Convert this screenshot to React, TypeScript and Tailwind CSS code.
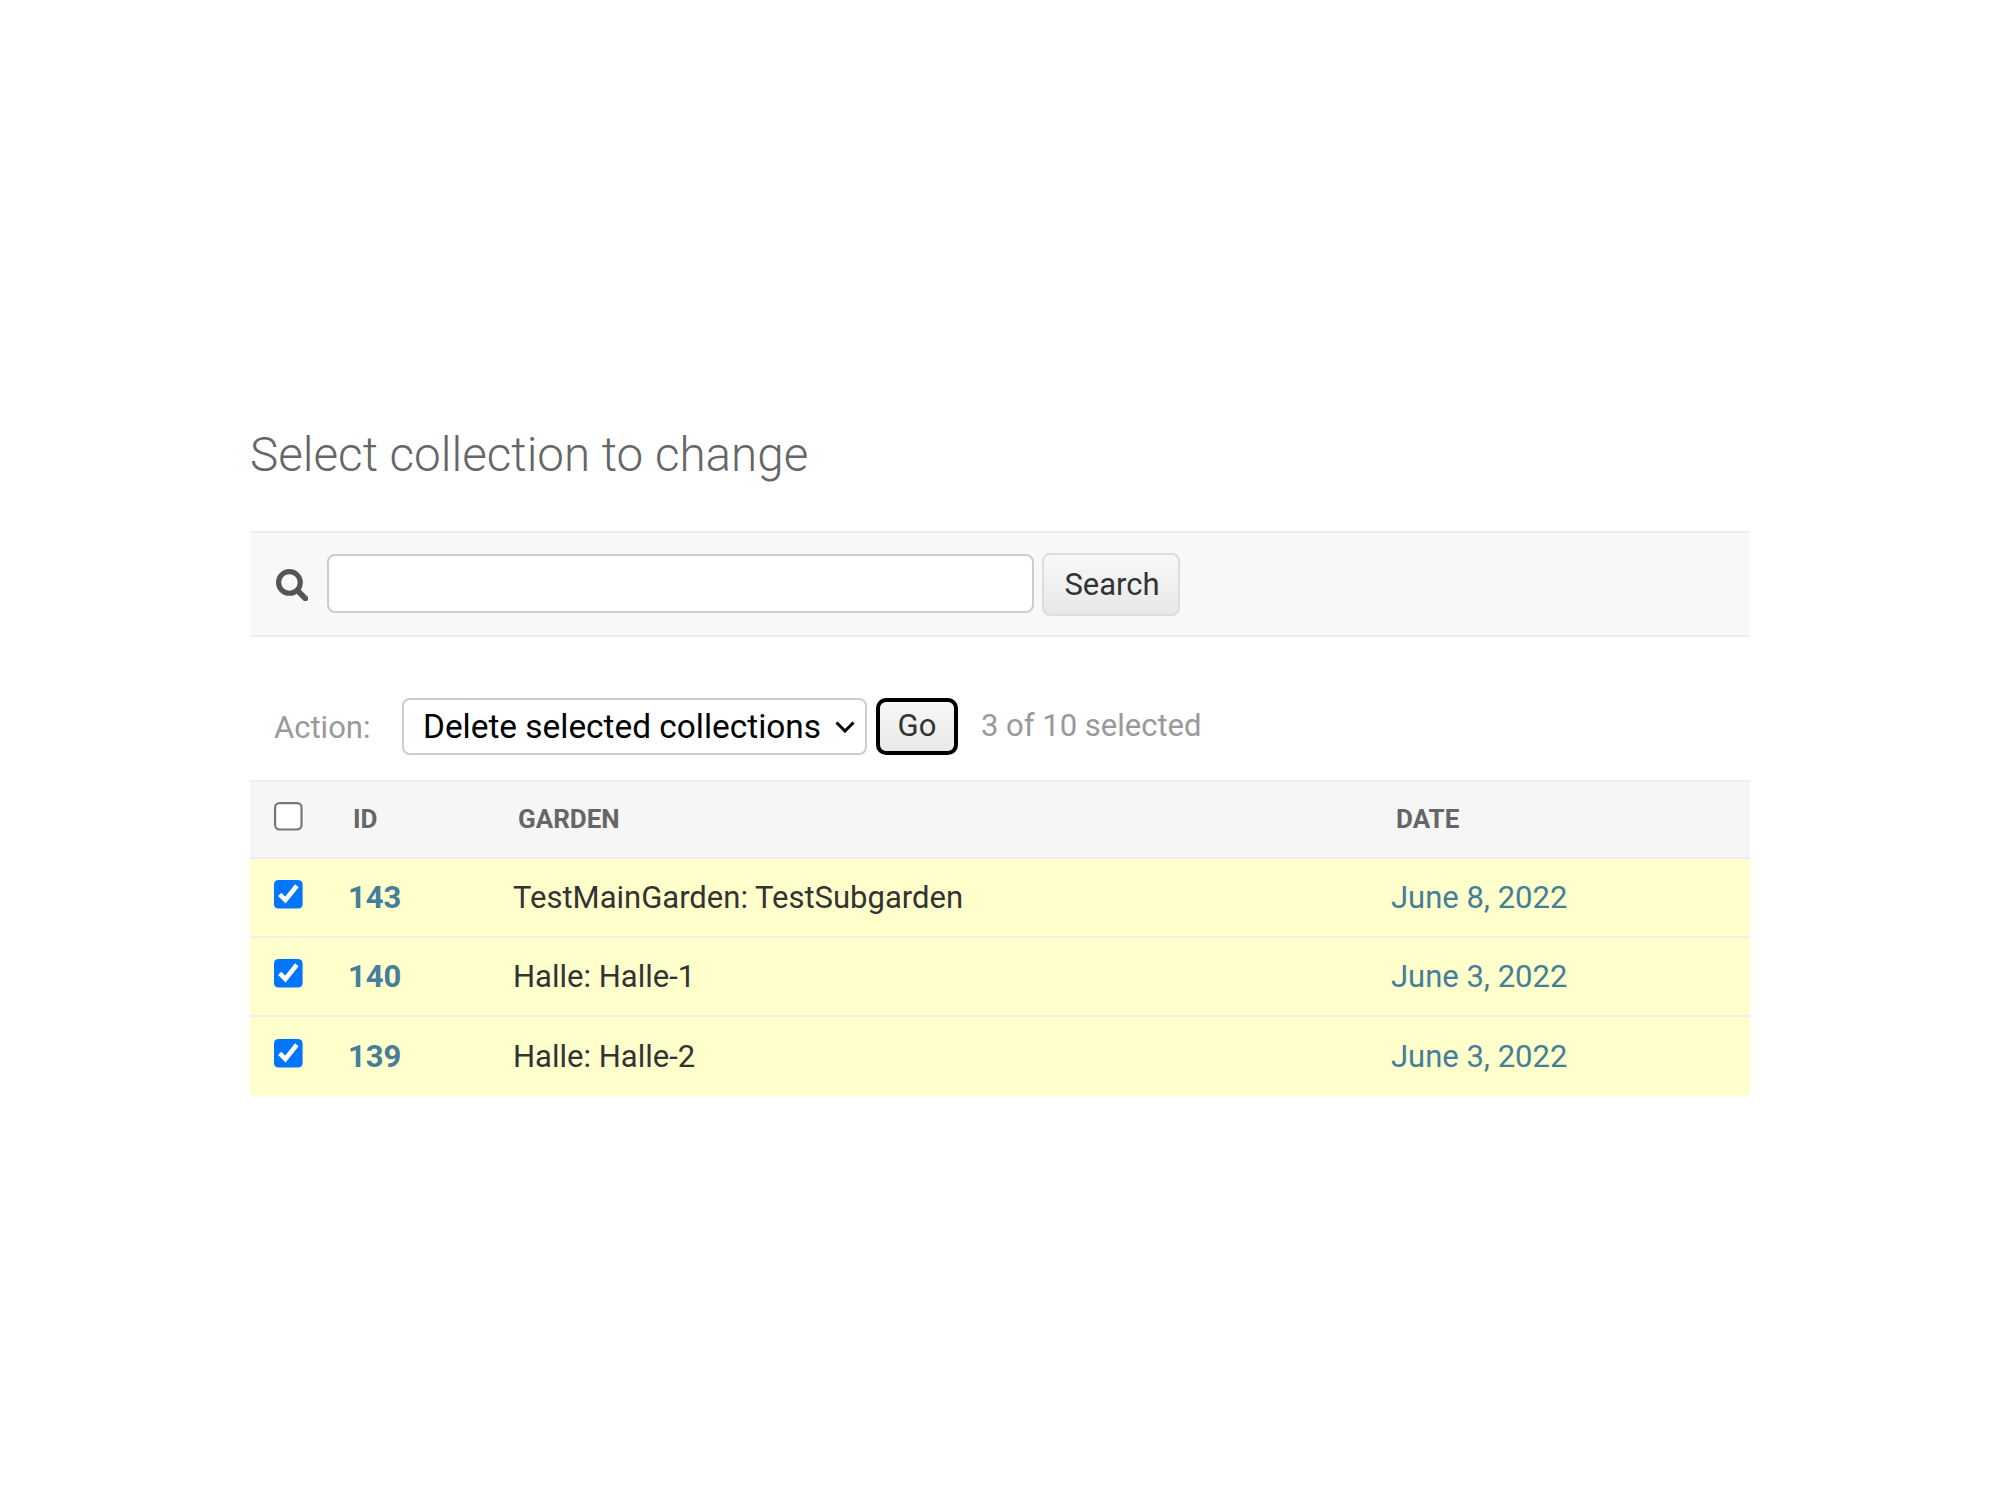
const rows = [
  { id: "143", garden: "TestMainGarden: TestSubgarden", date: "June 8, 2022" },
  { id: "140", garden: "Halle: Halle-1", date: "June 3, 2022" },
  { id: "139", garden: "Halle: Halle-2", date: "June 3, 2022" },
];

const gridCols = "grid grid-cols-[98px_165px_878px_1fr] items-center";

export default function App() {
  return (
    <div className="min-h-[1500px] bg-white pl-[250px] pr-[250px] pt-[425px] font-['Roboto',sans-serif] text-[31px] text-[#333]">
      <h1 className="mb-[46px] text-[47.6px] font-light leading-[60px] text-[#666]">
        Select collection to change
      </h1>

      <div className="flex h-[106px] items-center border-y-2 border-[#eee] bg-[#f8f8f8] pl-[26px]">
        <svg viewBox="0 0 31 31" className="mr-[19px] mt-[1px] h-[32px] w-[32px] text-[#555]" fill="none" stroke="currentColor">
          <circle cx="13" cy="13" r="10.5" strokeWidth="5" />
          <path d="M21 21l7.5 7.5" strokeWidth="5.5" strokeLinecap="round" />
        </svg>
        <input
          type="text"
          className="mb-[2px] h-[59px] w-[707px] rounded-[8px] border-2 border-[#ccc] bg-white"
        />
        <button className="ml-[8px] h-[63px] w-[138px] rounded-[8px] border-2 border-[#ddd] bg-gradient-to-b from-[#f8f8f8] to-[#e8e8e8] pl-[2px] pt-[3px] text-[#333]">
          Search
        </button>
      </div>

      <div className="flex h-[143px] items-center pl-[24px] pt-[36px]">
        <label className="w-[128px] pt-[4px] text-[#999]">Action:</label>
        <div className="relative">
          <select
            defaultValue="delete"
            className="block h-[57px] w-[465px] appearance-none rounded-[8px] border-2 border-[#ccc] bg-white pl-[19px] pt-[1px] text-[33.4px] text-black"
          >
            <option value="delete">Delete selected collections</option>
          </select>
          <svg viewBox="0 0 20 12" className="pointer-events-none absolute right-[12px] top-[23px] h-[12px] w-[20px]" fill="none" stroke="black" strokeWidth="3">
            <path d="M1.5 1.5L10 10l8.5-8.5" />
          </svg>
        </div>
        <button className="ml-[9px] h-[57px] w-[82px] rounded-[10px] border-[4px] border-black bg-gradient-to-b from-[#f8f8f8] to-[#e8e8e8] text-[#333]">
          Go
        </button>
        <span className="ml-[23px] text-[#999]">3 of 10 selected</span>
      </div>

      <div className={`${gridCols} h-[79px] border-y-2 border-[#eee] bg-[#f6f6f6] text-[26px] font-bold uppercase text-[#666]`}>
        <div className="pl-[24px]">
          <input type="checkbox" className="mb-[3px] block h-[13px] w-[13px] [zoom:2.2]" />
        </div>
        <div className="pl-[5px]">ID</div>
        <div className="pl-[5px]">Garden</div>
        <div className="pl-[5px]">Date</div>
      </div>

      {rows.map((row, i) => (
        <div
          key={row.id}
          className={`${gridCols} h-[79px] bg-[#ffc] pt-[2px] ${i < rows.length - 1 ? "border-b-2 border-[#eee]" : ""}`}
        >
          <div className="pl-[24px]">
            <input type="checkbox" defaultChecked className="mb-[3.5px] block h-[13px] w-[13px] [zoom:2.2]" />
          </div>
          <a className="font-bold text-[#447e9b]">{row.id}</a>
          <div>{row.garden}</div>
          <a className="text-[#447e9b]">{row.date}</a>
        </div>
      ))}
    </div>
  );
}
